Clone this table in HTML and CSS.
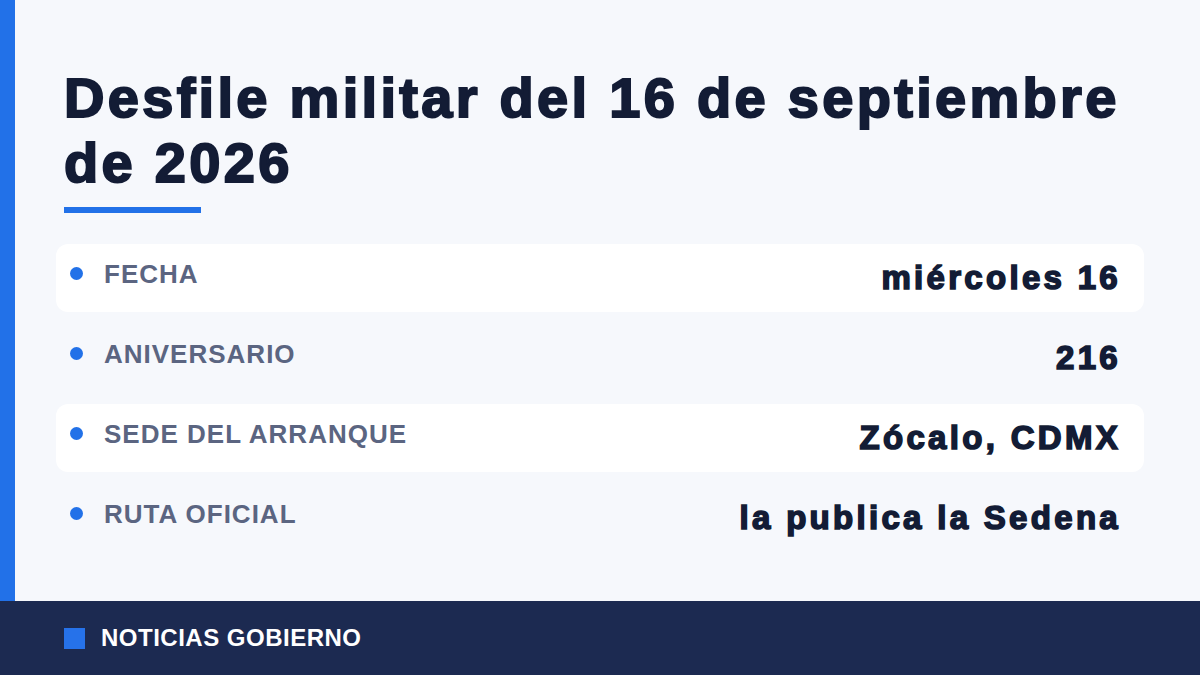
FILE: index.html
```html
<!DOCTYPE html>
<html lang="es">
<head>
<meta charset="utf-8">
<title>Desfile militar</title>
<link rel="stylesheet" href="styles.css">
</head>
<body>
<div class="page">
  <div class="content">
    <div class="accent-bar"></div>
    <main class="main">
      <header class="heading">
        <h1 class="title">Desfile militar del 16 de septiembre de 2026</h1>
        <div class="title-rule"></div>
      </header>
      <ul class="facts">
        <li class="fact fact-shaded">
          <span class="dot"></span>
          <span class="label">FECHA</span>
          <span class="value">miércoles 16</span>
        </li>
        <li class="fact">
          <span class="dot"></span>
          <span class="label">ANIVERSARIO</span>
          <span class="value">216</span>
        </li>
        <li class="fact fact-shaded">
          <span class="dot"></span>
          <span class="label">SEDE DEL ARRANQUE</span>
          <span class="value">Zócalo, CDMX</span>
        </li>
        <li class="fact">
          <span class="dot"></span>
          <span class="label">RUTA OFICIAL</span>
          <span class="value">la publica la Sedena</span>
        </li>
      </ul>
    </main>
  </div>
  <footer class="footer">
    <span class="footer-mark"></span>
    <span class="footer-text">NOTICIAS GOBIERNO</span>
  </footer>
</div>
</body>
</html>
```

FILE: styles.css
```css
* { box-sizing: border-box; }

html, body {
  margin: 0;
  padding: 0;
}

body {
  width: 1200px;
  height: 675px;
  overflow: hidden;
  background: #f6f8fc;
  font-family: "Liberation Sans", Arial, sans-serif;
}

.page {
  display: flex;
  flex-direction: column;
  height: 675px;
}

.content {
  display: flex;
  flex: 0 0 601px;
}

.accent-bar {
  flex: 0 0 15px;
  background: #2271e8;
}

.main {
  flex: 1;
  padding: 65px 56px 0 41px;
}

.heading {
  padding: 0 8px;
}

.title {
  margin: 0;
  font-size: 56px;
  line-height: 65px;
  font-weight: 700;
  letter-spacing: 3.3px;
  color: #131c35;
  -webkit-text-stroke: 2px #131c35;
}

.title-rule {
  width: 137px;
  height: 6px;
  margin-top: 12px;
  background: #2271e8;
}

.facts {
  list-style: none;
  margin: 31px 0 0;
  padding: 0;
  display: flex;
  flex-direction: column;
  gap: 12px;
}

.fact {
  display: flex;
  align-items: flex-start;
  height: 68px;
  padding: 16px 23px 0 14px;
  border-radius: 12px;
}

.fact-shaded {
  background: #ffffff;
}

.dot {
  flex: 0 0 13px;
  width: 13px;
  height: 13px;
  margin-top: 7px;
  margin-right: 21px;
  border-radius: 50%;
  background: #2271e8;
}

.label {
  font-size: 26px;
  font-weight: 700;
  letter-spacing: 1px;
  color: #5b6581;
  margin-top: -1px;
}

.value {
  margin-left: auto;
  font-size: 33px;
  line-height: 36px;
  font-weight: 700;
  letter-spacing: 3.3px;
  color: #131c35;
  -webkit-text-stroke: 1.6px #131c35;
}

.footer {
  flex: 0 0 74px;
  display: flex;
  align-items: center;
  gap: 16px;
  padding-left: 64px;
  background: #1c2a51;
}

.footer-mark {
  width: 21px;
  height: 21px;
  background: #2672ea;
}

.footer-text {
  font-size: 24px;
  font-weight: 700;
  letter-spacing: 0.5px;
  color: #ffffff;
}
```
